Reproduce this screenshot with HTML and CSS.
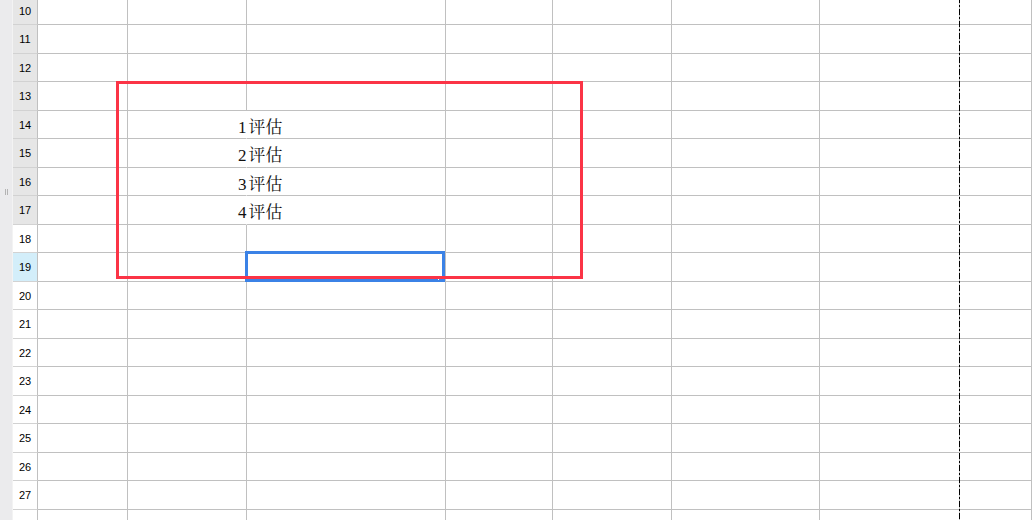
FILE: index.html
```html
<!doctype html>
<html lang="zh-CN">
  <head>
    <meta charset="UTF-8" />
    <meta name="viewport" content="width=device-width, initial-scale=1.0" />
    <title>工作表</title>
    <link rel="stylesheet" href="styles.css">
  </head>

  <body>
    <div class="window">
      <div class="strip">
        <span class="grip"></span>
      </div>

      <div class="sheet">
        <div class="row"><div class="head grey">10</div><div class="c"></div><div class="c"></div><div class="c"></div><div class="c"></div><div class="c"></div><div class="c"></div><div class="c"></div><div class="c"></div></div>
        <div class="row"><div class="head grey">11</div><div class="c"></div><div class="c"></div><div class="c"></div><div class="c"></div><div class="c"></div><div class="c"></div><div class="c"></div><div class="c"></div></div>
        <div class="row"><div class="head grey">12</div><div class="c"></div><div class="c"></div><div class="c"></div><div class="c"></div><div class="c"></div><div class="c"></div><div class="c"></div><div class="c"></div></div>
        <div class="row"><div class="head grey">13</div><div class="c"></div><div class="c"></div><div class="c"></div><div class="c"></div><div class="c"></div><div class="c"></div><div class="c"></div><div class="c"></div></div>
        <div class="row"><div class="head grey">14</div><div class="c"></div><div class="c spill"></div><div class="c"><span class="val"><span class="num">1</span>评估</span></div><div class="c"></div><div class="c"></div><div class="c"></div><div class="c"></div><div class="c"></div></div>
        <div class="row"><div class="head grey">15</div><div class="c"></div><div class="c spill"></div><div class="c"><span class="val"><span class="num">2</span>评估</span></div><div class="c"></div><div class="c"></div><div class="c"></div><div class="c"></div><div class="c"></div></div>
        <div class="row"><div class="head grey">16</div><div class="c"></div><div class="c spill"></div><div class="c"><span class="val"><span class="num">3</span>评估</span></div><div class="c"></div><div class="c"></div><div class="c"></div><div class="c"></div><div class="c"></div></div>
        <div class="row"><div class="head grey">17</div><div class="c"></div><div class="c spill"></div><div class="c"><span class="val"><span class="num">4</span>评估</span></div><div class="c"></div><div class="c"></div><div class="c"></div><div class="c"></div><div class="c"></div></div>
        <div class="row"><div class="head">18</div><div class="c"></div><div class="c"></div><div class="c"></div><div class="c"></div><div class="c"></div><div class="c"></div><div class="c"></div><div class="c"></div></div>
        <div class="row"><div class="head active">19</div><div class="c"></div><div class="c"></div><div class="c"></div><div class="c"></div><div class="c"></div><div class="c"></div><div class="c"></div><div class="c"></div></div>
        <div class="row"><div class="head">20</div><div class="c"></div><div class="c"></div><div class="c"></div><div class="c"></div><div class="c"></div><div class="c"></div><div class="c"></div><div class="c"></div></div>
        <div class="row"><div class="head">21</div><div class="c"></div><div class="c"></div><div class="c"></div><div class="c"></div><div class="c"></div><div class="c"></div><div class="c"></div><div class="c"></div></div>
        <div class="row"><div class="head">22</div><div class="c"></div><div class="c"></div><div class="c"></div><div class="c"></div><div class="c"></div><div class="c"></div><div class="c"></div><div class="c"></div></div>
        <div class="row"><div class="head">23</div><div class="c"></div><div class="c"></div><div class="c"></div><div class="c"></div><div class="c"></div><div class="c"></div><div class="c"></div><div class="c"></div></div>
        <div class="row"><div class="head">24</div><div class="c"></div><div class="c"></div><div class="c"></div><div class="c"></div><div class="c"></div><div class="c"></div><div class="c"></div><div class="c"></div></div>
        <div class="row"><div class="head">25</div><div class="c"></div><div class="c"></div><div class="c"></div><div class="c"></div><div class="c"></div><div class="c"></div><div class="c"></div><div class="c"></div></div>
        <div class="row"><div class="head">26</div><div class="c"></div><div class="c"></div><div class="c"></div><div class="c"></div><div class="c"></div><div class="c"></div><div class="c"></div><div class="c"></div></div>
        <div class="row"><div class="head">27</div><div class="c"></div><div class="c"></div><div class="c"></div><div class="c"></div><div class="c"></div><div class="c"></div><div class="c"></div><div class="c"></div></div>
        <!-- 28 行只露出一条边，序号在窗口外 -->
        <div class="row"><div class="head"></div><div class="c"></div><div class="c"></div><div class="c"></div><div class="c"></div><div class="c"></div><div class="c"></div><div class="c"></div><div class="c"></div></div>

        <!-- 选区 / 批注框 / 分页线 -->
        <div class="selection"><span class="fill-handle"></span></div>
        <div class="mark"></div>
        <div class="page-break"></div>
      </div>
    </div>
  </body>
</html>
```

FILE: styles.css
```css
html,
body {
  margin: 0;
  height: 100%;
  overflow: hidden;
  background-color: #fff;
}

.window {
  display: flex;
  height: 520px;
}

.strip {
  width: 12px;
  flex: none;
  padding-top: 189px;
  background-color: #ebebed;
  border-right: 1px solid #f3f3f3;
}

.grip {
  display: block;
  width: 1px;
  height: 6px;
  margin-left: 5px;
  border-left: 1px solid #b4b4b4;
  border-right: 1px solid #b4b4b4;
}

.sheet {
  position: relative;
  flex: 1;
  margin-top: -3px;
}

.row {
  display: grid;
  grid-template-columns: 25px 90px 119px 199px 107px 119px 148px 140px 1fr;
  height: 28px;
}
.row:nth-child(even) {
  height: 29px;
}

.c,
.head {
  box-sizing: border-box;
  border-right: 1px solid #c0c0c0;
  border-bottom: 1px solid #c0c0c0;
}

.head {
  display: flex;
  justify-content: center;
  align-items: center;
  font-family: "Liberation Sans", Arial, sans-serif;
  font-size: 11px;
  color: #000;
  border-bottom-color: #d2d2d2;
}
.head.grey {
  background-color: #e6e6e6;
}
.head.active {
  background-color: #d3eefa;
}

.c {
  display: flex;
  align-items: center;
  white-space: nowrap;
}

.spill {
  border-right-color: #fff;
}

.val {
  margin-left: -9px;
  padding-top: 1px;
  font-family: "Liberation Serif", "Noto Serif CJK SC", "Noto Sans CJK SC", serif;
  font-size: 17px;
  color: #111;
}
.num {
  margin-right: 2px;
}

.selection {
  position: absolute;
  left: 232px;
  top: 254px;
  width: 200px;
  height: 31px;
  box-sizing: border-box;
  border: 3px solid #3b82e6;
}

.fill-handle {
  position: absolute;
  right: -2px;
  bottom: -1px;
  width: 6px;
  height: 4px;
  box-sizing: border-box;
  background-color: #3b82e6;
  border-left: 1px solid #fff;
}

.mark {
  position: absolute;
  left: 103px;
  top: 84px;
  width: 467px;
  height: 198px;
  box-sizing: border-box;
  border: 3px solid #fb3446;
}

.page-break {
  position: absolute;
  left: 946px;
  top: 0;
  bottom: -3px;
  width: 1px;
  background: repeating-linear-gradient(
    to bottom,
    #000 0 6px,
    transparent 6px 8px,
    #000 8px 10px,
    transparent 10px 12px
  );
}
```
